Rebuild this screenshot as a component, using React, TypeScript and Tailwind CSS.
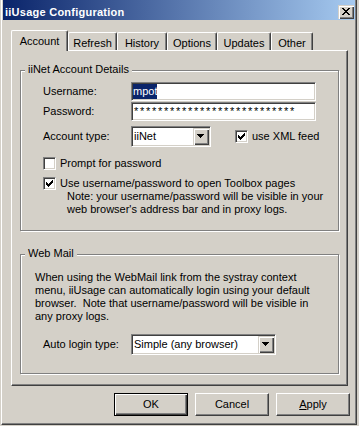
import React from 'react';

// classic win2k bevels
const raised =
  'border-t border-l border-t-white border-l-white border-r border-b border-r-[#404040] border-b-[#404040] shadow-[inset_-1px_-1px_0_#808080]';
const raised2 =
  'bg-[#d4d0c8] shadow-[inset_1px_1px_0_#d4d0c8,inset_2px_2px_0_#fff,inset_-1px_-1px_0_#404040,inset_-2px_-2px_0_#808080]';
const sunken =
  'border border-t-[#808080] border-l-[#808080] border-r-white border-b-white shadow-[inset_1px_1px_0_#404040,inset_-1px_-1px_0_#d4d0c8]';

function Check({ checked, className = '' }: { checked?: boolean; className?: string }) {
  return (
    <div className={`relative w-[13px] h-[13px] shrink-0 bg-white ${sunken} ${className}`}>
      {checked && (
        <svg
          className="absolute left-[2px] top-[2px]"
          width="7"
          height="7"
          viewBox="0 0 7 7"
          shapeRendering="crispEdges"
        >
          <path
            d="M0 2h1v3H0z M1 3h1v3H1z M2 4h1v3H2z M3 3h1v3H3z M4 2h1v3H4z M5 1h1v3H5z M6 0h1v3H6z"
            fill="#000"
          />
        </svg>
      )}
    </div>
  );
}

function Arrow() {
  return (
    <svg width="7" height="4" viewBox="0 0 7 4" shapeRendering="crispEdges">
      <path d="M0 0h7v1H0z M1 1h5v1H1z M2 2h3v1H2z M3 3h1v1H3z" fill="#000" />
    </svg>
  );
}

function Combo({ value, className }: { value: string; className: string }) {
  return (
    <div className={`h-[21px] p-[1px] flex bg-white ${sunken} ${className}`}>
      <div className="flex-1 pl-[1px] flex items-center leading-[13px]">{value}</div>
      <div className={`w-[16px] h-[17px] pl-[4px] pt-[6px] ${raised2}`}>
        <Arrow />
      </div>
    </div>
  );
}

function Tab({ label, className, active }: { label: string; className: string; active?: boolean }) {
  if (active) {
    return (
      <div
        className={`relative z-10 h-[21px] -mb-px pt-[4px] text-center leading-[13px] bg-[#d4d0c8] border-t border-l border-white border-r border-r-[#404040] shadow-[inset_-1px_0_0_#808080] rounded-t-[2px] ${className}`}
      >
        {label}
      </div>
    );
  }
  return (
    <div
      className={`h-[18px] pt-[4px] text-center leading-[13px] border-t border-l border-white border-r border-r-[#404040] shadow-[inset_-1px_0_0_#808080] rounded-t-[2px] ${className}`}
    >
      {label}
    </div>
  );
}

function Group({ title, className, children }: { title: string; className: string; children: React.ReactNode }) {
  return (
    <div
      className={`relative ml-[8px] w-[319px] border border-[#808080] shadow-[inset_1px_1px_0_#fff,1px_1px_0_#fff] ${className}`}
    >
      <span className="absolute left-[4px] top-[-8px] px-[3px] bg-[#d4d0c8] leading-[13px]">{title}</span>
      {children}
    </div>
  );
}

export default function App() {
  return (
    <div className="w-[359px] h-[426px] overflow-hidden bg-[#d4d0c8] text-black text-[11px] leading-[13px] font-['Liberation_Sans',Arial,sans-serif]">
      <div className="ml-[1px] w-[356px] h-[425px] px-[1px] border-l border-white border-r border-b border-r-[#404040] border-b-[#404040] shadow-[inset_-1px_-1px_0_#808080] flex flex-col">
        {/* title bar */}
        <div className="h-[20px] pt-[4px] pl-[2px] pr-[1px] flex items-center bg-[linear-gradient(to_right,#0a246a,#a6caf0)]">
          <span className="text-white font-bold text-[11px] tracking-[0.25px]">iiUsage Configuration</span>
          <div className={`ml-auto w-[16px] h-[14px] pl-[4px] pt-[3px] ${raised2}`}>
            <svg width="8" height="7" viewBox="0 0 8 7" shapeRendering="crispEdges">
              <path
                d="M0 0h2v1H0z M6 0h2v1H6z M1 1h2v1H1z M5 1h2v1H5z M2 2h4v1H2z M3 3h2v1H3z M2 4h4v1H2z M1 5h2v1H1z M5 5h2v1H5z M0 6h2v1H0z M6 6h2v1H6z"
                fill="#000"
              />
            </svg>
          </div>
        </div>

        {/* tabs */}
        <div className="mt-[10px] ml-[8px] h-[20px] flex items-end">
          <Tab label="Account" className="w-[57px]" active />
          <Tab label="Refresh" className="w-[49px]" />
          <Tab label="History" className="w-[50px]" />
          <Tab label="Options" className="w-[50px]" />
          <Tab label="Updates" className="w-[54px]" />
          <Tab label="Other" className="w-[42px]" />
        </div>

        <div className="ml-[8px] w-[337px] h-[336px] border-t border-l border-white border-r border-b border-r-[#404040] border-b-[#404040] shadow-[inset_-1px_-1px_0_#808080]">
          <Group title="iiNet Account Details" className="mt-[19px] h-[161px]">
            <div className="mt-[11px] pl-[22px] flex items-center">
              <span className="w-[88px]">Username:</span>
              <div className={`w-[185px] h-[19px] p-[1px] flex bg-white ${sunken}`}>
                <span className="bg-[#0a246a] text-white leading-[15px]">mpot</span>
              </div>
            </div>
            <div className="mt-[1px] pl-[22px] flex items-center">
              <span className="w-[88px]">Password:</span>
              <div className={`w-[185px] h-[19px] p-[1px] pl-[2px] flex items-center bg-white ${sunken}`}>
                <span className="tracking-[1.72px]">***************************</span>
              </div>
            </div>
            <div className="mt-[5px] pl-[22px] flex items-center">
              <span className="w-[88px]">Account type:</span>
              <Combo value="iiNet" className="w-[80px]" />
              <Check checked className="ml-[24px]" />
              <span className="ml-[4px]">use XML feed</span>
            </div>
            <div className="mt-[10px] pl-[22px] flex items-center">
              <Check />
              <span className="ml-[4px]">Prompt for password</span>
            </div>
            <div className="mt-[7px] pl-[22px] flex items-center">
              <Check checked />
              <span className="ml-[4px]">Use username/password to open Toolbox pages</span>
            </div>
            <p className="pl-[46px]">
              Note: your username/password will be visible in your
              <br />
              web browser's address bar and in proxy logs.
            </p>
          </Group>

          <Group title="Web Mail" className="mt-[23px] h-[120px]">
            <p className="mt-[16px] pl-[14px] whitespace-pre">
              {'When using the WebMail link from the systray context\nmenu, iiUsage can automatically login using your default\nbrowser.  Note that username/password will be visible in\nany proxy logs.'}
            </p>
            <div className="mt-[11px] pl-[22px] flex items-center">
              <span className="w-[88px]">Auto login type:</span>
              <Combo value="Simple (any browser)" className="w-[145px]" />
            </div>
          </Group>
        </div>

        {/* buttons */}
        <div className="mt-[7px] ml-[111px] flex gap-[7px]">
          <button className="w-[74px] h-[23px] border border-black bg-[#d4d0c8] shadow-[inset_1px_1px_0_#fff,inset_-1px_-1px_0_#404040,inset_-2px_-2px_0_#808080] flex items-center justify-center">
            OK
          </button>
          <button className={`w-[74px] h-[23px] bg-[#d4d0c8] flex items-center justify-center ${raised}`}>Cancel</button>
          <button className={`w-[74px] h-[23px] bg-[#d4d0c8] flex items-center justify-center ${raised}`}>
            <span>
              <span className="underline">A</span>pply
            </span>
          </button>
        </div>
      </div>
    </div>
  );
}
